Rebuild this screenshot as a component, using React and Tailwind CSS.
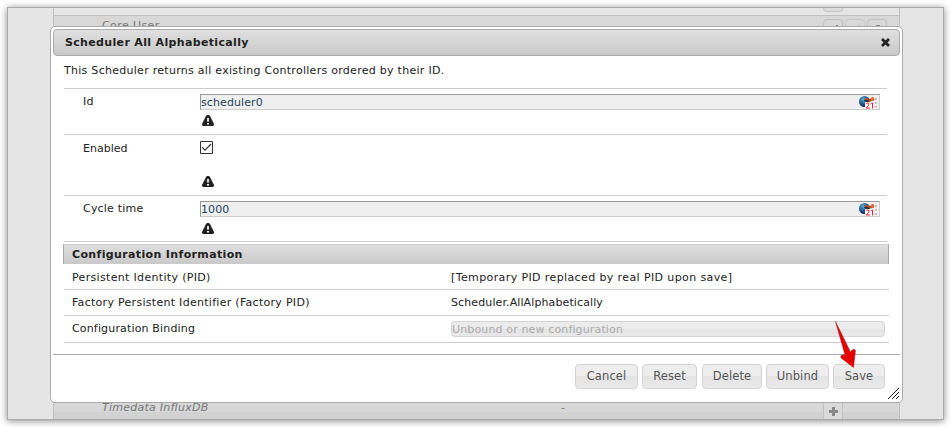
import React from 'react';

function Warning() {
  return (
    <svg className="ml-[2px] block" width="12" height="11" viewBox="0 0 12 11">
      <path d="M5 0h2l1 1 4 8v1l-1 1H1l-1-1V9l4-8z" fill="#222" />
      <path d="M5 3h2v3.5H5zM5 8h2v1.6H5z" fill="#fff" />
      <path d="M5.6 3h.8v3h-.8z" fill="#aaa" />
    </svg>
  );
}

function GlobeCalendar() {
  return (
    <svg className="mr-px block" width="19" height="14" viewBox="0 0 19 14">
      <defs>
        <radialGradient id="globe" cx="0.4" cy="0.3" r="0.7">
          <stop offset="0" stopColor="#5eaed0" />
          <stop offset="0.5" stopColor="#2868a0" />
          <stop offset="1" stopColor="#131d55" />
        </radialGradient>
      </defs>
      <circle cx="5.5" cy="6.5" r="5.5" fill="url(#globe)" />
      <path d="M5 3.5l4-.5 2 1 3-1 1.5 2-2 1-4 1-3-1z" fill="#a94b2c" />
      <path d="M5 5l4 0 1 2-4-.5z" fill="#242738" />
      <circle cx="13.5" cy="4" r="1.9" fill="#df6937" />
      <path d="M6 7h8v7H6z" fill="#fff" />
      <path d="M7 8.9q.6-1.2 2-1 1.8.6.8 2.2L7.2 13H11M12.2 8.7l1.3-.7v5.5" fill="none" stroke="#ff1c24" strokeWidth="1" />
      <path d="M16 3h2v2h-2zM16 7h2v2h-2zM16 11h2v2h-2zM14 7.5h1v1h-1z" fill="#c4c4c4" />
    </svg>
  );
}

function Field({ value }) {
  return (
    <div className="flex h-4 w-[680px] items-center justify-between border border-[#ccc] border-l-[#999] border-t-[#999] bg-[#efefef]">
      <span className="pt-[2px] leading-[14px] tracking-[0.1px] text-[#1d4560]">{value}</span>
      <GlobeCalendar />
    </div>
  );
}

function Button({ children, className }) {
  return (
    <button
      className={`h-[25px] rounded-[4px] border border-[#d3d3d3] bg-[linear-gradient(#ededed_0_50%,#e4e4e4_50%,#e9e9e9_100%)] text-[11.5px] leading-[23px] tracking-[0.1px] text-[#555] ${className}`}
    >
      {children}
    </button>
  );
}

function InfoRow({ label, children, className, labelClassName }) {
  return (
    <div className={`ml-px flex w-[825px] items-center border-b border-[#ccc] pl-2 ${className}`}>
      <div className={`w-[379px] ${labelClassName}`}>{label}</div>
      {children}
    </div>
  );
}

function Backdrop() {
  return (
    <div className="ml-[45px] mr-[43px] flex h-[411px] flex-col justify-between border-x border-[#c0c0c0] text-[#777]">
      <div>
        <div className="flex h-[8px] items-start border-b border-[#c0c0c0] pl-[769px]">
          <div className="h-1 w-5 rounded-b-[4px] border border-t-0 border-[#c6c6c6] bg-[#dcdcdc]" />
        </div>
        <div className="flex h-[30px] items-start bg-[#d8d8d8] pl-12">
          <div className="w-[459px] pt-[2px] leading-[15px] tracking-[0.4px]">Core User</div>
          <div className="w-[262px] pt-[2px] leading-[15px]">-</div>
          <div className="mt-[3px] flex gap-[2px]">
            <div className="h-5 w-5 rounded-[4px] border border-[#c0c0c0] pl-3 pt-[5px]"><div className="h-2 w-[2px] bg-[#888]" /></div>
            <div className="h-5 w-5 rounded-[4px] border border-[#cacaca] pl-3 pt-[5px]"><div className="h-2 w-[2px] bg-[#bbb]" /></div>
            <div className="h-5 w-5 rounded-[4px] border border-[#c0c0c0] pl-2 pt-[5px]"><div className="h-2 w-1 bg-[#888]" /></div>
          </div>
        </div>
      </div>
      <div className="flex h-[21px] items-end bg-[linear-gradient(#d8d8d8_0_65%,#d2d2d2_65%)] pl-12">
        <div className="h-[19px] w-[459px] italic leading-[15px] tracking-[0.25px]">Timedata InfluxDB</div>
        <div className="h-[19px] w-[262px] leading-[15px]">-</div>
        <div className="flex h-5 w-5 items-end justify-center border-x border-[#c0c0c0] bg-[#dadada] pb-[3px]">
          <svg width="9" height="9" viewBox="0 0 9 9"><path d="M3 0h3v3h3v3H6v3H3V6H0V3h3z" fill="#888" /></svg>
        </div>
      </div>
    </div>
  );
}

function Dialog() {
  return (
    <div className="absolute left-[50px] top-[26px] flex h-[377px] w-[853px] flex-col rounded-[5px] border border-[#aaa] bg-white p-[2px] text-[#222]">
      <div className="flex h-[27px] shrink-0 items-center justify-between rounded-[4px] border border-[#aaa] bg-[linear-gradient(#e0e0e0,#c9c9c9)] pl-[11px] pr-[9px]">
        <h1 className="text-[11px] font-bold tracking-[0.34px]">Scheduler All Alphabetically</h1>
        <svg className="mb-px" width="9" height="9" viewBox="0 0 9 9">
          <path d="M2 2l5 5M7 2l-5 5" stroke="#222" strokeWidth="2.8" strokeLinecap="square" />
        </svg>
      </div>
      <div className="h-[299px] shrink-0 border-b border-[#aaa] pl-[10px]">
        <p className="ml-px h-8 pt-[7px] leading-[15px] tracking-[0.28px]">This Scheduler returns all existing Controllers ordered by their ID.</p>
        <div className="ml-px w-[823px] border-y border-[#ccc]">
          <div className="flex h-[45px] pl-[19px] pt-[5px]">
            <div className="w-[117px] leading-[15px] tracking-[0.2px]">Id</div>
            <div className="flex flex-col gap-[5px]"><Field value="scheduler0" /><Warning /></div>
          </div>
          <div className="flex h-[62px] border-y border-[#ccc] pl-[19px] pt-[6px]">
            <div className="w-[117px] leading-[15px]">Enabled</div>
            <div className="flex flex-col gap-[22px]">
              <svg width="13" height="13" viewBox="0 0 13 13">
                <path d="M.5.5h12v12H.5z" fill="#fff" stroke="#333" />
                <path d="M2 6.2l3 3L11 3" fill="none" stroke="#333" strokeWidth="1.2" />
              </svg>
              <Warning />
            </div>
          </div>
          <div className="flex h-[45px] pl-[19px] pt-[5px]">
            <div className="w-[117px] leading-[15px] tracking-[0.2px]">Cycle time</div>
            <div className="flex flex-col gap-[6px]"><Field value="1000" /><Warning /></div>
          </div>
        </div>
        <h2 className="mt-[2px] h-5 w-[826px] border border-b-0 border-[#aaa] border-t-[#ccc] bg-[linear-gradient(#dfdfdf,#c9c9c9)] pl-2 text-[11px] font-bold leading-[19px] tracking-[0.36px]">
          Configuration Information
        </h2>
        <InfoRow label="Persistent Identity (PID)" className="h-[26px] pt-px" labelClassName="tracking-[0.33px]">
          <span className="tracking-[0.39px]">[Temporary PID replaced by real PID upon save]</span>
        </InfoRow>
        <InfoRow label="Factory Persistent Identifier (Factory PID)" className="h-[26px]" labelClassName="tracking-[0.29px]">
          <span className="tracking-[0.11px]">Scheduler.AllAlphabetically</span>
        </InfoRow>
        <InfoRow label="Configuration Binding" className="h-[27px]" labelClassName="pb-[2px] tracking-[0.16px]">
          <div className="h-4 w-[434px] rounded-[4px] border border-[#d3d3d3] bg-[linear-gradient(#ececec_0_50%,#e4e4e4_50%,#e9e9e9)] leading-[15px] tracking-[0.14px] text-[#aaa]">
            Unbound or new configuration
          </div>
        </InfoRow>
      </div>
      <div className="flex items-start justify-end pr-[15px] pt-[9px]">
        <div className="flex gap-1">
          <Button className="w-[63px]">Cancel</Button>
          <Button className="w-[55px]">Reset</Button>
          <Button className="ml-px w-[60px]">Delete</Button>
          <Button className="w-[63px]">Unbind</Button>
          <Button className="w-[52px]">Save</Button>
        </div>
      </div>
      <svg className="absolute bottom-[3px] right-[3px]" width="11" height="11" viewBox="0 0 11 11">
        <path d="M0 11L11 0M4 11l7-7M8 11l3-3" stroke="#222" />
      </svg>
      <svg className="absolute left-[784px] top-[294px]" width="23" height="48" viewBox="0 0 23 48">
        <path d="M.5.5L15.5 31l1-1.5q3-2.5 4 0l-2 17L6 37q-1-4 4-3z" fill="#e60000" stroke="#a02020" strokeWidth=".5" />
      </svg>
    </div>
  );
}

export default function App() {
  return (
    <main className="relative h-[427px] w-[951px] overflow-hidden bg-white p-2 font-['DejaVu_Sans',sans-serif] text-[11px] leading-[15px]">
      <div className="h-[411px] w-[935px] bg-[#e5e5e5] shadow-[0_0_0_1px_#aaa,0_1px_7px_1px_#888]">
        <Backdrop />
      </div>
      <Dialog />
    </main>
  );
}
